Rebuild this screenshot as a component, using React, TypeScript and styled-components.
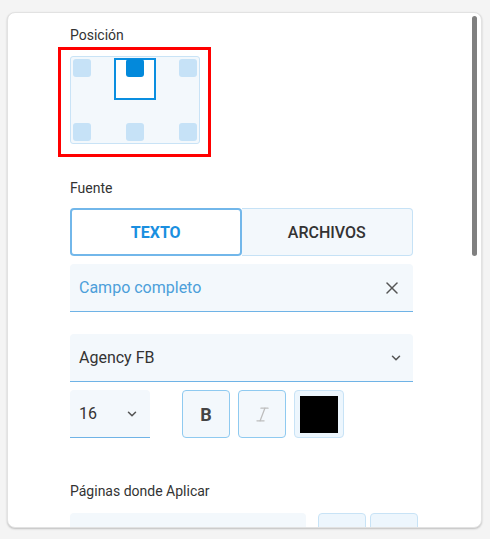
import React from 'react';
import styled, { createGlobalStyle, css } from 'styled-components';
import { X, ChevronDown, Italic } from 'lucide-react';

// ============= 全域樣式 =============

const GlobalStyle = createGlobalStyle`
  html, body {
    margin: 0;
    padding: 0;
    background: #f4f4f4;
    font-family: Roboto, "Liberation Sans", Arial, sans-serif;
  }
  * { box-sizing: border-box; }
`;

// ============= 樣式定義 =============

const Page = styled.div`
  padding: 12px 8px 11px 7px;
`;

const Card = styled.div`
  position: relative;
  width: 475px;
  height: 516px;
  background: #fff;
  border-radius: 8px;
  border: 1px solid #e2e2e2;
  box-shadow: 0 1px 2px rgba(0, 0, 0, 0.22);
  overflow: hidden;
`;

const ScrollThumb = styled.div`
  position: absolute;
  top: 3px;
  right: 4px;
  width: 5px;
  height: 240px;
  border-radius: 3px;
  background: #808080;
`;

const Content = styled.div`
  display: flex;
  flex-direction: column;
  padding: 12px 0 0 62px;
  width: 405px;
`;

const FieldLabel = styled.div<{ $top?: number }>`
  margin-top: ${p => p.$top ?? 0}px;
  font-size: 14px;
  font-weight: 400;
  line-height: 20px;
  color: #333;
`;

const HighlightFrame = styled.div`
  margin: 2px 0 0 -12px;
  width: 153px;
  height: 110px;
  border: 3px solid #ff0000;
  padding: 6px 0 0 9px;
`;

const Preview = styled.div`
  position: relative;
  width: 130px;
  height: 88px;
  padding: 2px;
  background: #f3f8fc;
  border: 1px solid #c9e3f6;
  border-radius: 3px;
  display: grid;
  grid-template-columns: repeat(3, 18px);
  grid-template-rows: repeat(2, 18px);
  justify-content: space-between;
  align-content: space-between;
`;

const Anchor = styled.div<{ $active?: boolean }>`
  position: relative;
  z-index: 1;
  width: 18px;
  height: 18px;
  border-radius: 3px;
  background: ${p => (p.$active ? '#0389db' : '#c6e2f7')};
`;

const ElementBox = styled.div`
  position: absolute;
  left: 43px;
  top: 1px;
  width: 42px;
  height: 42px;
  border: 2px solid #0a8ee0;
  background: #fff;
`;

const Tabs = styled.div`
  margin-top: 10px;
  display: grid;
  grid-template-columns: 1fr 1fr;
  height: 48px;
`;

const Tab = styled.div<{ $active?: boolean }>`
  display: flex;
  align-items: center;
  justify-content: center;
  font-size: 16px;
  ${p =>
    p.$active
      ? css`
          background: #fff;
          border: 2px solid #72b7ea;
          border-radius: 4px;
          color: #1a8fe0;
          font-weight: 700;
        `
      : css`
          background: #f3f8fc;
          border: 1px solid #c6e2f6;
          border-left: none;
          border-radius: 0 4px 4px 0;
          color: #333;
          font-weight: 500;
        `}
`;

const FilledField = styled.div<{ $top: number; $width?: number; $muted?: boolean }>`
  margin-top: ${p => p.$top}px;
  width: ${p => (p.$width ? `${p.$width}px` : '100%')};
  height: 48px;
  flex-shrink: 0;
  display: flex;
  align-items: center;
  justify-content: space-between;
  padding: 0 10px 0 9px;
  background: #f3f8fc;
  border-bottom: 1px solid #6fb3e6;
  border-radius: 4px 4px 0 0;
  font-size: 16px;
  color: ${p => (p.$muted ? '#4c9fda' : '#333')};
`;

const ToolRow = styled.div<{ $top: number }>`
  margin-top: ${p => p.$top}px;
  display: flex;
  align-items: flex-start;
`;

const Tools = styled.div<{ $left: number; $gap: number }>`
  margin-left: ${p => p.$left}px;
  display: flex;
  gap: ${p => p.$gap}px;
`;

const ToolButton = styled.div<{ $soft?: boolean; $width?: number }>`
  width: ${p => p.$width ?? 48}px;
  height: 48px;
  display: flex;
  align-items: center;
  justify-content: center;
  background: ${p => (p.$soft ? '#edf6fd' : '#f3f8fc')};
  border: 1px solid ${p => (p.$soft ? '#c8e3f6' : '#8fcaf0')};
  border-radius: 4px;
  font-size: 18px;
  font-weight: 700;
  color: #444;
`;

const Swatch = styled.div<{ $color: string }>`
  width: 38px;
  height: 37px;
  background: ${p => p.$color};
`;

// ============= 組件實現 =============

const anchors = [false, true, false, false, false, false];

export default function App() {
  return (
    <Page>
      <GlobalStyle />
      <Card>
        <Content>
          {/* 位置 */}
          <FieldLabel>Posición</FieldLabel>
          <HighlightFrame>
            <Preview>
              <ElementBox />
              {anchors.map((active, i) => (
                <Anchor key={i} $active={active} />
              ))}
            </Preview>
          </HighlightFrame>

          {/* 來源 */}
          <FieldLabel $top={21}>Fuente</FieldLabel>
          <Tabs>
            <Tab $active>TEXTO</Tab>
            <Tab>ARCHIVOS</Tab>
          </Tabs>
          <FilledField $top={8} $muted>
            <span>Campo completo</span>
            <X size={20} strokeWidth={1.8} color="#555" style={{ marginRight: 1 }} />
          </FilledField>

          <FilledField $top={22}>
            <span>Agency FB</span>
            <ChevronDown size={14} strokeWidth={2.6} color="#555" />
          </FilledField>

          <ToolRow $top={8}>
            <FilledField $top={0} $width={80} style={{ paddingRight: 11 }}>
              <span>16</span>
              <ChevronDown size={14} strokeWidth={2.6} color="#555" />
            </FilledField>
            <Tools $left={32} $gap={8}>
              <ToolButton>B</ToolButton>
              <ToolButton>
                <Italic size={19} strokeWidth={1.6} color="#bdbdbd" />
              </ToolButton>
              <ToolButton $soft $width={50}>
                <Swatch $color="#000" />
              </ToolButton>
            </Tools>
          </ToolRow>

          {/* 頁面 */}
          <FieldLabel $top={43}>Páginas donde Aplicar</FieldLabel>
          <ToolRow $top={12}>
            <FilledField $top={0} $width={236} />
            <Tools $left={12} $gap={4}>
              <ToolButton $soft />
              <ToolButton $soft />
            </Tools>
          </ToolRow>
        </Content>
        <ScrollThumb />
      </Card>
    </Page>
  );
}
